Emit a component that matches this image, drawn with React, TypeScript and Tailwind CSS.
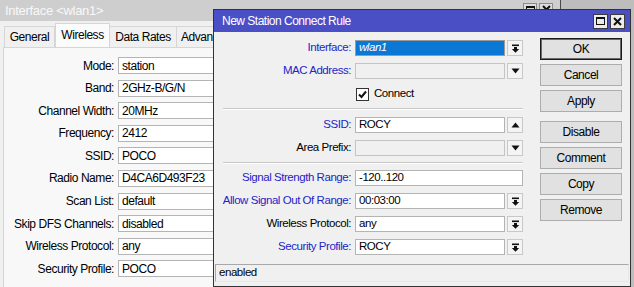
import React from 'react';

const bgRows: [string, string][] = [
  ['Mode', 'station'],
  ['Band', '2GHz-B/G/N'],
  ['Channel Width', '20MHz'],
  ['Frequency', '2412'],
  ['SSID', 'POCO'],
  ['Radio Name', 'D4CA6D493F23'],
  ['Scan List', 'default'],
  ['Skip DFS Channels', 'disabled'],
  ['Wireless Protocol', 'any'],
  ['Security Profile', 'POCO'],
];

function MoreIcon() {
  return (
    <svg width="9" height="9" viewBox="0 0 9 9">
      <rect x="1" y="0.5" width="7" height="1.6" fill="#111" />
      <rect x="3" y="3" width="3" height="2" fill="#111" />
      <polygon points="0.8,5 8.2,5 4.5,8.8" fill="#111" />
    </svg>
  );
}

function Arrow({ up }: { up?: boolean }) {
  return (
    <svg width="9" height="6" viewBox="0 0 9 6">
      {up ? <polygon points="0.5,5.5 8.5,5.5 4.5,0.5" fill="#111" /> : <polygon points="0.5,0.5 8.5,0.5 4.5,5.5" fill="#111" />}
    </svg>
  );
}

function TitleButtons({ light }: { light?: boolean }) {
  const box = light
    ? 'w-[14px] h-[14px] border border-[#8a8a8a] bg-[#dcdcdc] flex items-center justify-center'
    : 'w-[15px] h-[15px] border border-[#3c3c3c] bg-[#ececec] flex items-center justify-center';
  return (
    <div className="flex gap-[2px]">
      <div className={box}>
        <div className="w-[9px] h-[8px] border border-[#111] border-t-2" />
      </div>
      <div className={box}>
        <svg width="9" height="9" viewBox="0 0 9 9">
          <path d="M1 1 L8 8 M8 1 L1 8" stroke="#111" strokeWidth="2" />
        </svg>
      </div>
    </div>
  );
}

function Field({
  label,
  value,
  blue,
  btn,
  disabled,
  selected,
  full,
}: {
  label: string;
  value?: string;
  blue?: boolean;
  btn?: 'more' | 'down' | 'up';
  disabled?: boolean;
  selected?: boolean;
  full?: boolean;
}) {
  return (
    <div className="flex items-center h-[16px]">
      <div className={`w-[137px] text-right whitespace-nowrap ${blue ? 'text-[#2424c8]' : 'text-black'}`}>{label}:</div>
      <div className="w-[4px]" />
      <div
        className={`h-[16px] flex items-center pl-[3px] border ${full ? 'w-[168px]' : 'w-[150px]'} ${
          selected
            ? 'bg-[#0a78d4] border-[#9a9a9a] text-white italic'
            : disabled
            ? 'bg-[#f0f0f0] border-[#c4c4c4]'
            : 'bg-white border-[#b4b4b4]'
        }`}
      >
        {value}
      </div>
      {btn && (
        <div className="ml-[2px] w-[16px] h-[16px] border border-[#c8c8c8] bg-[#f4f4f4] flex items-center justify-center">
          {btn === 'more' ? <MoreIcon /> : <Arrow up={btn === 'up'} />}
        </div>
      )}
    </div>
  );
}

function Separator() {
  return <div className="ml-[9px] w-[300px] h-[2px] border-t border-[#c8c8c8] border-b border-b-white" />;
}

function Btn({ children, def, className = '' }: { children: React.ReactNode; def?: boolean; className?: string }) {
  return (
    <div
      className={`h-[22px] flex items-center justify-center bg-[#e1e1e1] border ${
        def ? 'border-[#1a1a1a] shadow-[inset_0_0_0_1px_#6a6a6a]' : 'border-[#adadad]'
      } text-[12px] text-black ${className}`}
    >
      {children}
    </div>
  );
}

export default function App() {
  return (
    <div className="relative w-[634px] h-[287px] overflow-hidden bg-[#bdbdbd] font-['Liberation_Sans',Arial,sans-serif] text-[11.5px] tracking-[-0.45px] leading-none">
      {/* background window */}
      <div className="absolute left-0 top-0 w-[561px] h-[300px] border-r border-[#4a4a4a] bg-[#f0f0f0] flex flex-col">
        <div className="h-[21px] bg-[#cecece] flex items-center justify-between pl-[5px] pr-[7px] text-[13px] tracking-[-0.3px] text-[#f8f8f8]">
          <span>Interface &lt;wlan1&gt;</span>
          <div className="-mt-[2px]">
            <TitleButtons light />
          </div>
        </div>
        <div className="h-[26px] flex items-end pl-[4px] text-[12px] text-black">
          <div className="w-[51px] h-[21px] border border-b-0 border-[#d6d6d6] bg-[#f0f0f0] flex items-center justify-center">General</div>
          <div className="w-[55px] h-[24px] border border-b-0 border-[#d6d6d6] bg-[#fbfbfb] flex items-center justify-center pb-[2px]">Wireless</div>
          <div className="w-[67px] h-[21px] border border-b-0 border-l-0 border-[#d6d6d6] bg-[#f0f0f0] flex items-center justify-center">Data Rates</div>
          <div className="w-[70px] h-[21px] border border-b-0 border-l-0 border-[#d6d6d6] bg-[#f0f0f0] flex items-center pl-[4px]">Advanced</div>
        </div>
        <div className="flex-1 mx-[3px] border border-[#d6d6d6] bg-[#f8f8f8] pt-[9px] flex flex-col gap-[5.6px] text-[12px]">
          {bgRows.map(([l, v]) => (
            <div key={l} className="flex items-center h-[17px]">
              <div className="w-[110px] text-right whitespace-nowrap">{l}:</div>
              <div className="w-[4px]" />
              <div className="w-[200px] h-[17px] bg-white border border-[#b4b4b4] flex items-center pl-[3px]">{v}</div>
            </div>
          ))}
        </div>
      </div>

      {/* dialog */}
      <div className="absolute left-[213px] top-[9px] w-[418px] h-[278px] border border-[#333] bg-[#f0f0f0] flex flex-col">
        <div className="h-[22px] shrink-0 bg-[#4b4fc6] flex items-center justify-between pl-[8px] pr-[5px] text-white text-[12px] tracking-[-0.5px]">
          <span>New Station Connect Rule</span>
          <TitleButtons />
        </div>
        <div className="flex flex-1">
          <div className="w-[310px] pt-[8px] flex flex-col">
            <Field label="Interface" value="wlan1" blue btn="more" selected />
            <div className="mt-[7px]">
              <Field label="MAC Address" btn="down" blue disabled />
            </div>
            <div className="mt-[7px] h-[16px] flex items-center pl-[142px]">
              <div className="w-[13px] h-[13px] bg-white border border-[#333] flex items-center justify-center">
                <svg width="9" height="9" viewBox="0 0 9 9">
                  <path d="M1 4.5 L3.5 7 L8 1.5" stroke="#111" strokeWidth="2" fill="none" />
                </svg>
              </div>
              <span className="ml-[5px]">Connect</span>
            </div>
            <div className="mt-[6px]">
              <Separator />
            </div>
            <div className="mt-[7px]">
              <Field label="SSID" value="ROCY" blue btn="up" />
            </div>
            <div className="mt-[7px]">
              <Field label="Area Prefix" btn="down" disabled />
            </div>
            <div className="mt-[6px]">
              <Separator />
            </div>
            <div className="mt-[6px]">
              <Field label="Signal Strength Range" value="-120..120" blue full />
            </div>
            <div className="mt-[7px]">
              <Field label="Allow Signal Out Of Range" value="00:03:00" blue btn="more" />
            </div>
            <div className="mt-[7px]">
              <Field label="Wireless Protocol" value="any" btn="more" />
            </div>
            <div className="mt-[7px]">
              <Field label="Security Profile" value="ROCY" blue btn="more" />
            </div>
          </div>
          <div className="ml-[16px] w-[82px] pt-[6px] flex flex-col gap-[4px]">
            <Btn def>OK</Btn>
            <Btn>Cancel</Btn>
            <Btn>Apply</Btn>
            <Btn className="mt-[5px]">Disable</Btn>
            <Btn>Comment</Btn>
            <Btn>Copy</Btn>
            <Btn>Remove</Btn>
          </div>
        </div>
        <div className="mx-[1px] mb-[4px] h-[18px] border border-[#a8a8a8] border-b-[#e8e8e8] border-r-[#e8e8e8] bg-[#f0f0f0] flex items-center pl-[3px]">
          enabled
        </div>
      </div>
    </div>
  );
}
